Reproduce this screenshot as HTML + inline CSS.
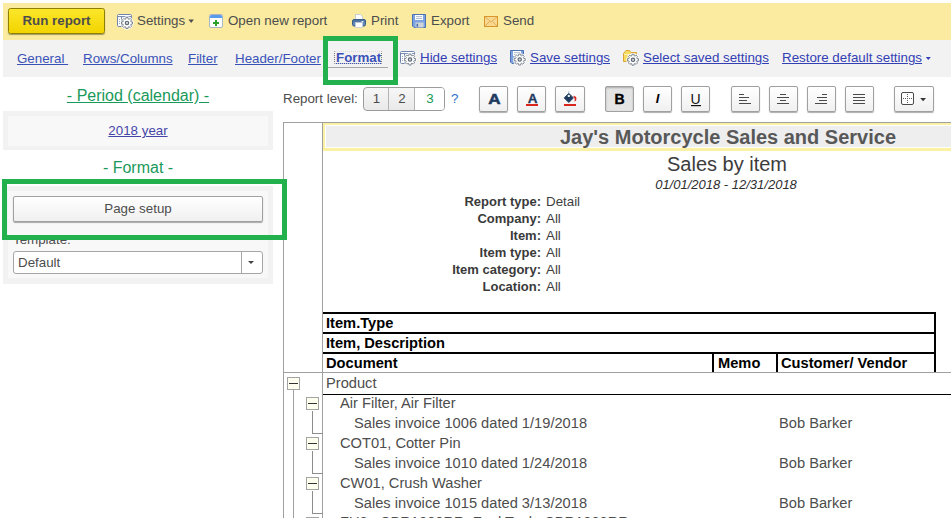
<!DOCTYPE html>
<html><head><meta charset="utf-8"><title>Sales by item</title>
<style>
*{box-sizing:border-box;margin:0;padding:0}
html,body{width:951px;height:518px;overflow:hidden;background:#fff}
body{position:relative;font-family:"Liberation Sans",sans-serif;font-size:13.33px;color:#4d4d4d}
.abs{position:absolute}
.t{position:absolute;white-space:nowrap;line-height:16px}
#topbar{left:3px;top:3px;width:948px;height:37px;background:#faeba0}
#linkbar{left:3px;top:40px;width:948px;height:37px;background:#f2f2f2}
#run{left:8px;top:8px;width:97px;height:26px;border:1px solid #8f7e00;border-radius:2.5px;background:linear-gradient(#fbe62a,#f2d400);box-shadow:0 1px 1px rgba(0,0,0,.35);font-weight:bold;font-size:13.33px;text-align:center;line-height:24px;color:#4d4d4d}
.tb{top:13px}
.lk{top:51px;color:#3a52b8;text-decoration:underline}
.gl{color:#19995a;text-decoration:underline}
.panel{background:#f2f2f2}
.inner{background:#f8f8f8}
.btn{position:absolute;border:1px solid #a0a0a0;border-radius:2px;background:linear-gradient(#ffffff,#f0f0f0);box-shadow:0 1px 1px rgba(0,0,0,.32)}
.fb{top:86px;width:29px;height:26px}
.green{position:absolute;border:5px solid #22b14c}
.row{position:absolute;white-space:nowrap;font-size:14.67px;line-height:20px;color:#4d4d4d}
.hd{position:absolute;white-space:nowrap;font-size:14.67px;line-height:20px;color:#000;font-weight:bold}
.pl{position:absolute;white-space:nowrap;font-weight:bold;font-size:13px;line-height:17px;color:#3a3a3a;right:410px;text-align:right}
.pv{position:absolute;white-space:nowrap;font-size:13.33px;line-height:17px;left:546px;color:#3e3e3e}
.bk{position:absolute;background:#000}
.gy{position:absolute;background:#a0a0a0}
.tbx{position:absolute;width:13px;height:13px;border:1px solid #a3a3a3;background:#fffff0}
.tbx:after{content:"";position:absolute;left:1px;top:5px;width:9px;height:1px;background:#333}
</style></head><body>
<div class="abs" id="topbar"></div>
<div class="abs" id="linkbar"></div>
<div class="abs" id="run">Run report</div>

<!-- top toolbar -->
<div class="t tb" style="left:137px">Settings</div>
<div class="t tb" style="left:228px">Open new report</div>
<div class="t tb" style="left:371px">Print</div>
<div class="t tb" style="left:431px">Export</div>
<div class="t tb" style="left:503px">Send</div>

<!-- link bar -->
<div class="t lk" style="left:17px">General&nbsp;</div>
<div class="t lk" style="left:83px">Rows/Columns</div>
<div class="t lk" style="left:188px">Filter</div>
<div class="t lk" style="left:235px">Header/Footer</div>
<div class="t lk" style="left:336px;top:50px;font-weight:bold">Format</div>
<div class="abs" style="left:334px;top:51px;width:48px;height:13px;border:1px dotted #777;border-top-color:#ddd;border-bottom-color:#ccc"></div>
<div class="abs" style="left:328px;top:67px;width:60px;height:1px;background:#a6a6a6"></div>
<div class="t lk" style="left:420px;top:50px;color:#3340b4">Hide settings</div>
<div class="t lk" style="left:530px;top:50px;color:#3340b4">Save settings</div>
<div class="t lk" style="left:643px;top:50px;color:#3340b4">Select saved settings</div>
<div class="t lk" style="left:782px;top:50px;color:#3340b4">Restore default settings</div>

<!-- left panel -->
<div class="t gl" style="left:3px;width:270px;text-align:center;top:86px;font-size:16px;line-height:20px">- Period (calendar) -</div>
<div class="abs panel" style="left:3px;top:111px;width:270px;height:39px"></div>
<div class="abs inner" style="left:8px;top:116px;width:260px;height:30px"></div>
<div class="t lk" style="left:8px;width:260px;text-align:center;top:123px;color:#4545a8">2018 year</div>
<div class="t" style="left:3px;width:270px;text-align:center;top:158px;font-size:16px;line-height:20px;color:#19995a">- Format -</div>
<div class="abs panel" style="left:3px;top:186px;width:270px;height:98px"></div>
<div class="abs inner" style="left:8px;top:191px;width:260px;height:87px"></div>
<div class="btn" style="left:13px;top:196px;width:250px;height:26px;text-align:center;line-height:23px">Page setup</div>
<div class="t" style="left:13px;top:232px">Template:</div>
<div class="abs" style="left:13px;top:251px;width:250px;height:23px;border:1px solid #a6a6a6;border-radius:3px;background:#fff;line-height:21px;padding-left:4px">Default</div>
<div class="abs" style="left:241px;top:252px;width:1px;height:21px;background:#a6a6a6"></div>
<div class="abs" style="left:248px;top:261px;width:0;height:0;border:3px solid transparent;border-top:3.5px solid #444"></div>

<!-- format bar -->
<div class="t" style="left:283px;top:91px">Report level:</div>
<div class="btn" style="left:363px;top:87px;width:82px;height:24px;border-radius:4px;border-color:#9c9c9c;background:linear-gradient(#f7f7f7,#e9e9e9);box-shadow:none"></div>
<div class="abs" style="left:415px;top:88px;width:29px;height:22px;background:#fff;border-radius:0 3px 3px 0"></div>
<div class="abs" style="left:388px;top:88px;width:1px;height:22px;background:#b3b3b3"></div>
<div class="abs" style="left:414px;top:88px;width:1px;height:22px;background:#b3b3b3"></div>
<div class="t" style="left:364px;width:25px;text-align:center;top:91px">1</div>
<div class="t" style="left:389px;width:26px;text-align:center;top:91px">2</div>
<div class="t" style="left:415px;width:30px;text-align:center;top:91px;color:#19995a">3</div>
<div class="t" style="left:451px;top:91px;color:#2a6fc9">?</div>

<div class="btn fb" style="left:479px"></div><div class="t" style="left:480px;width:29px;text-align:center;top:89px;font-size:15.5px;line-height:20px;font-weight:bold;color:#1f3a5f;-webkit-text-stroke:.6px #1f3a5f;transform:scaleX(1.1)">A</div>
<div class="btn fb" style="left:517px"></div><div class="t" style="left:518px;width:29px;text-align:center;top:89px;font-size:13.5px;line-height:20px;font-weight:bold;color:#1f3a5f;-webkit-text-stroke:.3px #1f3a5f">A</div>
<div class="btn fb" style="left:555px;width:30px"></div>
<div class="btn fb" style="left:605px;background:#e4e4e4;box-shadow:inset 0 1px 2px rgba(0,0,0,.25)"></div><div class="t" style="left:605px;width:29px;text-align:center;top:89px;font-size:14px;line-height:20px;font-weight:bold;color:#000;-webkit-text-stroke:.4px #000">B</div>
<div class="btn fb" style="left:643px"></div><div class="t" style="left:643px;width:29px;text-align:center;top:89px;font-size:13px;line-height:20px;font-weight:bold;font-style:italic;color:#000">I</div>
<div class="btn fb" style="left:681px"></div><div class="t" style="left:681px;width:29px;text-align:center;top:89px;font-size:14px;line-height:20px;color:#111">U</div>
<div class="btn fb" style="left:731px"></div>
<div class="btn fb" style="left:769px"></div>
<div class="btn fb" style="left:807px"></div>
<div class="btn fb" style="left:845px"></div>
<div class="btn fb" style="left:894px;width:40px"></div>

<!-- report -->
<div class="gy" style="left:283px;top:122px;width:668px;height:1px"></div>
<div class="gy" style="left:283px;top:122px;width:1px;height:396px"></div>
<div class="gy" style="left:322px;top:122px;width:1px;height:396px"></div>
<div class="abs" style="left:323px;top:123px;width:640px;height:28px;border:2px solid #fcf0a2;border-bottom-width:3px;background:#eeeeee;box-shadow:inset 0 0 0 1px #fff"></div>
<div class="t" style="left:503px;width:448px;text-align:center;top:125px;font-size:20px;line-height:24px;font-weight:bold;color:#585858;margin-left:1px">Jay's Motorcycle Sales and Service</div>
<div class="t" style="left:503px;width:448px;text-align:center;top:152px;font-size:20px;line-height:24px;color:#3c3c3c">Sales by item</div>
<div class="t" style="left:503px;width:448px;text-align:center;top:177px;font-size:13px;line-height:16px;font-style:italic;margin-left:-1px;color:#2e2e2e">01/01/2018 - 12/31/2018</div>

<div class="pl" style="top:193px">Report type:</div><div class="pv" style="top:193px">Detail</div>
<div class="pl" style="top:210px">Company:</div><div class="pv" style="top:210px">All</div>
<div class="pl" style="top:227px">Item:</div><div class="pv" style="top:227px">All</div>
<div class="pl" style="top:244px">Item type:</div><div class="pv" style="top:244px">All</div>
<div class="pl" style="top:261px">Item category:</div><div class="pv" style="top:261px">All</div>
<div class="pl" style="top:278px">Location:</div><div class="pv" style="top:278px">All</div>

<!-- table header -->
<div class="bk" style="left:323px;top:312px;width:613px;height:2px"></div>
<div class="bk" style="left:323px;top:332px;width:613px;height:2px"></div>
<div class="bk" style="left:323px;top:352px;width:613px;height:2px"></div>
<div class="bk" style="left:934px;top:312px;width:2px;height:60px"></div>
<div class="bk" style="left:712px;top:352px;width:2px;height:20px"></div>
<div class="bk" style="left:776px;top:352px;width:2px;height:20px"></div>
<div class="hd" style="left:326px;top:313px">Item.Type</div>
<div class="hd" style="left:326px;top:333px">Item, Description</div>
<div class="hd" style="left:326px;top:353px">Document</div>
<div class="hd" style="left:718px;top:353px">Memo</div>
<div class="hd" style="left:781px;top:353px">Customer/ Vendor</div>
<div class="gy" style="left:283px;top:372px;width:668px;height:1px"></div>
<div class="bk" style="left:323px;top:394px;width:628px;height:1px"></div>

<!-- rows -->
<div class="row" style="left:326px;top:373px">Product</div>
<div class="row" style="left:340px;top:393px">Air Filter, Air Filter</div>
<div class="row" style="left:354px;top:413px">Sales invoice 1006 dated 1/19/2018</div><div class="row" style="left:779px;top:413px">Bob Barker</div>
<div class="row" style="left:340px;top:433px">COT01, Cotter Pin</div>
<div class="row" style="left:354px;top:453px">Sales invoice 1010 dated 1/24/2018</div><div class="row" style="left:779px;top:453px">Bob Barker</div>
<div class="row" style="left:340px;top:473px">CW01, Crush Washer</div>
<div class="row" style="left:354px;top:493px">Sales invoice 1015 dated 3/13/2018</div><div class="row" style="left:779px;top:493px">Bob Barker</div>
<div class="row" style="left:340px;top:512px">FU2,&nbsp; CBR1000RR, Fuel Tank, CBR1000RR</div>

<!-- tree -->
<div class="gy" style="left:293px;top:390px;width:1px;height:128px"></div>
<div class="abs" style="left:312px;top:411px;width:11px;height:23px;border-left:1px solid #8c8c8c;border-bottom:1px solid #8c8c8c"></div>
<div class="abs" style="left:312px;top:451px;width:11px;height:23px;border-left:1px solid #8c8c8c;border-bottom:1px solid #8c8c8c"></div>
<div class="abs" style="left:312px;top:491px;width:11px;height:23px;border-left:1px solid #8c8c8c;border-bottom:1px solid #8c8c8c"></div>
<div class="tbx" style="left:287px;top:377px"></div>
<div class="tbx" style="left:306px;top:397px"></div>
<div class="tbx" style="left:306px;top:437px"></div>
<div class="tbx" style="left:306px;top:477px"></div>
<div class="tbx" style="left:306px;top:517px"></div>

<svg class="abs" style="left:0;top:0" width="951" height="518" viewBox="0 0 951 518">
<!--ICONS-->
<g transform="translate(117 14)"><rect x="0.5" y="0.5" width="14" height="12" rx="1.2" fill="#fff" stroke="#7084ad"/><path d="M0.5 2.6h14M4.5 2.6v10" stroke="#7084ad" stroke-width="1" fill="none"/><path d="M1.3 1.5h2.6M5.3 1.5h3.4M9.9 1.5h3.6" stroke="#fff" stroke-width=".9"/><rect x="2.2" y="5" width=".9" height=".9" fill="#7084ad"/><rect x="2.2" y="7" width=".9" height=".9" fill="#7084ad"/><rect x="2.2" y="9" width=".9" height=".9" fill="#7084ad"/></g>
<g transform="translate(127 23)"><path d="M4.05 -1.11 L5.49 -1.09 L5.49 1.09 L4.05 1.11 L3.65 2.08 L4.66 3.11 L3.11 4.66 L2.08 3.65 L1.11 4.05 L1.09 5.49 L-1.09 5.49 L-1.11 4.05 L-2.08 3.65 L-3.11 4.66 L-4.66 3.11 L-3.65 2.08 L-4.05 1.11 L-5.49 1.09 L-5.49 -1.09 L-4.05 -1.11 L-3.65 -2.08 L-4.66 -3.11 L-3.11 -4.66 L-2.08 -3.65 L-1.11 -4.05 L-1.09 -5.49 L1.09 -5.49 L1.11 -4.05 L2.08 -3.65 L3.11 -4.66 L4.66 -3.11 L3.65 -2.08Z" fill="#fff" stroke="#fff" stroke-width="2.4" stroke-linejoin="round" opacity=".85"/><path d="M4.05 -1.11 L5.49 -1.09 L5.49 1.09 L4.05 1.11 L3.65 2.08 L4.66 3.11 L3.11 4.66 L2.08 3.65 L1.11 4.05 L1.09 5.49 L-1.09 5.49 L-1.11 4.05 L-2.08 3.65 L-3.11 4.66 L-4.66 3.11 L-3.65 2.08 L-4.05 1.11 L-5.49 1.09 L-5.49 -1.09 L-4.05 -1.11 L-3.65 -2.08 L-4.66 -3.11 L-3.11 -4.66 L-2.08 -3.65 L-1.11 -4.05 L-1.09 -5.49 L1.09 -5.49 L1.11 -4.05 L2.08 -3.65 L3.11 -4.66 L4.66 -3.11 L3.65 -2.08Z" fill="#fdfdfd" stroke="#6a7582" stroke-width=".85" stroke-linejoin="round"/><circle r="1.7" fill="#cfd3d7" stroke="#5c6773" stroke-width="1.1"/></g>
<path d="M188.5 19.5h5.4l-2.7 3.4z" fill="#4d4d4d"/>
<g transform="translate(209 14)"><rect x="0.5" y="0.5" width="13" height="13" rx="1.5" fill="#fff" stroke="#a9b4c4"/><path d="M1 2.5Q1 1 2.5 1h9Q13 1 13 2.5V4H1z" fill="#5b9ae8"/><path d="M6 6h2v2h2v2h-2v2h-2v-2h-2v-2h2z" fill="#2aa22a"/></g>
<g transform="translate(352 14)"><path d="M3.5 0.5h5l2 2V6h-7z" fill="#fff" stroke="#b8c4d4" stroke-width=".8"/><rect x="0.5" y="5.5" width="13" height="6.5" rx="1.5" fill="#6088b5" stroke="#3a5d89"/><rect x="1.2" y="6.2" width="11.6" height="1.6" fill="#4a6e9b"/><rect x="9.5" y="7" width="2" height="1" fill="#e8f0fa"/><rect x="3.5" y="8.5" width="7" height="5" fill="#fff" stroke="#c0c9d6" stroke-width=".8"/></g>
<g transform="translate(412 14)"><path d="M0.5 0.5h13v13h-11.5l-1.5-1.5z" fill="#7da2e0" stroke="#4c72b4"/><rect x="3" y="1" width="8" height="5" fill="#fff"/><rect x="4" y="2.2" width="6" height="0.9" fill="#a9b4c4"/><rect x="4" y="4" width="6" height="0.9" fill="#a9b4c4"/><rect x="3.5" y="8.5" width="8" height="5" fill="#cfd4d6"/><rect x="4.5" y="9.8" width="1.6" height="3" fill="#4c72b4"/></g>
<g transform="translate(484 16)"><rect x="0.5" y="0.5" width="13" height="10" fill="#f8d890" stroke="#d9962c"/><path d="M1 1l6 5 6-5M1 10l4.5-4.5M13 10l-4.5-4.5" fill="none" stroke="#dea448" stroke-width=".8"/></g>
<g transform="translate(400 51)"><rect x="0.5" y="0.5" width="14" height="12" rx="1.2" fill="#fff" stroke="#7084ad"/><path d="M0.5 2.6h14M4.5 2.6v10" stroke="#7084ad" stroke-width="1" fill="none"/><path d="M1.3 1.5h2.6M5.3 1.5h3.4M9.9 1.5h3.6" stroke="#fff" stroke-width=".9"/><rect x="2.2" y="5" width=".9" height=".9" fill="#7084ad"/><rect x="2.2" y="7" width=".9" height=".9" fill="#7084ad"/><rect x="2.2" y="9" width=".9" height=".9" fill="#7084ad"/></g>
<g transform="translate(410 59.6)"><path d="M4.05 -1.11 L5.49 -1.09 L5.49 1.09 L4.05 1.11 L3.65 2.08 L4.66 3.11 L3.11 4.66 L2.08 3.65 L1.11 4.05 L1.09 5.49 L-1.09 5.49 L-1.11 4.05 L-2.08 3.65 L-3.11 4.66 L-4.66 3.11 L-3.65 2.08 L-4.05 1.11 L-5.49 1.09 L-5.49 -1.09 L-4.05 -1.11 L-3.65 -2.08 L-4.66 -3.11 L-3.11 -4.66 L-2.08 -3.65 L-1.11 -4.05 L-1.09 -5.49 L1.09 -5.49 L1.11 -4.05 L2.08 -3.65 L3.11 -4.66 L4.66 -3.11 L3.65 -2.08Z" fill="#fff" stroke="#fff" stroke-width="2.4" stroke-linejoin="round" opacity=".85"/><path d="M4.05 -1.11 L5.49 -1.09 L5.49 1.09 L4.05 1.11 L3.65 2.08 L4.66 3.11 L3.11 4.66 L2.08 3.65 L1.11 4.05 L1.09 5.49 L-1.09 5.49 L-1.11 4.05 L-2.08 3.65 L-3.11 4.66 L-4.66 3.11 L-3.65 2.08 L-4.05 1.11 L-5.49 1.09 L-5.49 -1.09 L-4.05 -1.11 L-3.65 -2.08 L-4.66 -3.11 L-3.11 -4.66 L-2.08 -3.65 L-1.11 -4.05 L-1.09 -5.49 L1.09 -5.49 L1.11 -4.05 L2.08 -3.65 L3.11 -4.66 L4.66 -3.11 L3.65 -2.08Z" fill="#fdfdfd" stroke="#6a7582" stroke-width=".85" stroke-linejoin="round"/><circle r="1.7" fill="#cfd3d7" stroke="#5c6773" stroke-width="1.1"/></g>
<g transform="translate(510 50)"><path d="M0.5 0.5h13v13h-11.5l-1.5-1.5z" fill="#7da2e0" stroke="#4c72b4"/><rect x="3" y="1" width="8" height="5" fill="#fff"/><rect x="4" y="2.2" width="6" height="0.9" fill="#a9b4c4"/><rect x="4" y="4" width="6" height="0.9" fill="#a9b4c4"/><rect x="3.5" y="8.5" width="8" height="5" fill="#cfd4d6"/><rect x="4.5" y="9.8" width="1.6" height="3" fill="#4c72b4"/></g>
<g transform="translate(519.7 59.6)"><path d="M4.05 -1.11 L5.49 -1.09 L5.49 1.09 L4.05 1.11 L3.65 2.08 L4.66 3.11 L3.11 4.66 L2.08 3.65 L1.11 4.05 L1.09 5.49 L-1.09 5.49 L-1.11 4.05 L-2.08 3.65 L-3.11 4.66 L-4.66 3.11 L-3.65 2.08 L-4.05 1.11 L-5.49 1.09 L-5.49 -1.09 L-4.05 -1.11 L-3.65 -2.08 L-4.66 -3.11 L-3.11 -4.66 L-2.08 -3.65 L-1.11 -4.05 L-1.09 -5.49 L1.09 -5.49 L1.11 -4.05 L2.08 -3.65 L3.11 -4.66 L4.66 -3.11 L3.65 -2.08Z" fill="#fff" stroke="#fff" stroke-width="2.4" stroke-linejoin="round" opacity=".85"/><path d="M4.05 -1.11 L5.49 -1.09 L5.49 1.09 L4.05 1.11 L3.65 2.08 L4.66 3.11 L3.11 4.66 L2.08 3.65 L1.11 4.05 L1.09 5.49 L-1.09 5.49 L-1.11 4.05 L-2.08 3.65 L-3.11 4.66 L-4.66 3.11 L-3.65 2.08 L-4.05 1.11 L-5.49 1.09 L-5.49 -1.09 L-4.05 -1.11 L-3.65 -2.08 L-4.66 -3.11 L-3.11 -4.66 L-2.08 -3.65 L-1.11 -4.05 L-1.09 -5.49 L1.09 -5.49 L1.11 -4.05 L2.08 -3.65 L3.11 -4.66 L4.66 -3.11 L3.65 -2.08Z" fill="#fdfdfd" stroke="#6a7582" stroke-width=".85" stroke-linejoin="round"/><circle r="1.7" fill="#cfd3d7" stroke="#5c6773" stroke-width="1.1"/></g>
<g transform="translate(623 50)"><path d="M0.5 3.5l2.5-3h3.5l1.5 2h5.5v9h-13z" fill="#f7dc62" stroke="#d8a437"/><path d="M1 4.5h12" stroke="#fbeeb0" stroke-width="1"/></g>
<g transform="translate(633 59.8)"><path d="M4.05 -1.11 L5.49 -1.09 L5.49 1.09 L4.05 1.11 L3.65 2.08 L4.66 3.11 L3.11 4.66 L2.08 3.65 L1.11 4.05 L1.09 5.49 L-1.09 5.49 L-1.11 4.05 L-2.08 3.65 L-3.11 4.66 L-4.66 3.11 L-3.65 2.08 L-4.05 1.11 L-5.49 1.09 L-5.49 -1.09 L-4.05 -1.11 L-3.65 -2.08 L-4.66 -3.11 L-3.11 -4.66 L-2.08 -3.65 L-1.11 -4.05 L-1.09 -5.49 L1.09 -5.49 L1.11 -4.05 L2.08 -3.65 L3.11 -4.66 L4.66 -3.11 L3.65 -2.08Z" fill="#fff" stroke="#fff" stroke-width="2.4" stroke-linejoin="round" opacity=".85"/><path d="M4.05 -1.11 L5.49 -1.09 L5.49 1.09 L4.05 1.11 L3.65 2.08 L4.66 3.11 L3.11 4.66 L2.08 3.65 L1.11 4.05 L1.09 5.49 L-1.09 5.49 L-1.11 4.05 L-2.08 3.65 L-3.11 4.66 L-4.66 3.11 L-3.65 2.08 L-4.05 1.11 L-5.49 1.09 L-5.49 -1.09 L-4.05 -1.11 L-3.65 -2.08 L-4.66 -3.11 L-3.11 -4.66 L-2.08 -3.65 L-1.11 -4.05 L-1.09 -5.49 L1.09 -5.49 L1.11 -4.05 L2.08 -3.65 L3.11 -4.66 L4.66 -3.11 L3.65 -2.08Z" fill="#fdfdfd" stroke="#6a7582" stroke-width=".85" stroke-linejoin="round"/><circle r="1.7" fill="#cfd3d7" stroke="#5c6773" stroke-width="1.1"/></g>
<path d="M925.8 57h5l-2.5 3z" fill="#3340b4"/>
<!--/ICONS-->
<rect x="526" y="104" width="12" height="2" fill="#d9261c"/>
<g><path d="M568.8 93.3l4.6 4.6-4.6 4.6-4.6-4.6z" fill="#1f3a5f" stroke="#1f3a5f" stroke-width=".9" stroke-linejoin="round"/><circle cx="568.8" cy="95.9" r="1.2" fill="#eef3f8"/><path d="M568.8 91v2.4" stroke="#a9bdd6" stroke-width=".9"/><path d="M573.2 95.7Q577.4 96 576.2 100Q575.7 101.3 574.5 101.8Q575.3 98.4 573.2 95.7z" fill="#d9261c"/><rect x="564" y="104" width="12" height="2" fill="#d9261c"/></g>
<rect x="691" y="105" width="10" height="1.2" fill="#111"/>




<rect x="739" y="94" width="5" height="1" fill="#4a4a4a"/><rect x="739" y="97" width="10" height="1" fill="#4a4a4a"/><rect x="739" y="100" width="8" height="1" fill="#4a4a4a"/><rect x="739" y="103" width="12" height="1" fill="#4a4a4a"/><rect x="780" y="94" width="6" height="1" fill="#4a4a4a"/><rect x="777" y="97" width="12" height="1" fill="#4a4a4a"/><rect x="780" y="100" width="6" height="1" fill="#4a4a4a"/><rect x="777" y="103" width="12" height="1" fill="#4a4a4a"/><rect x="822" y="94" width="5" height="1" fill="#4a4a4a"/><rect x="817" y="97" width="10" height="1" fill="#4a4a4a"/><rect x="819" y="100" width="8" height="1" fill="#4a4a4a"/><rect x="815" y="103" width="12" height="1" fill="#4a4a4a"/><rect x="853" y="94" width="12" height="1" fill="#4a4a4a"/><rect x="853" y="97" width="12" height="1" fill="#4a4a4a"/><rect x="853" y="100" width="12" height="1" fill="#4a4a4a"/><rect x="853" y="103" width="12" height="1" fill="#4a4a4a"/>
<rect x="901.5" y="92.5" width="12" height="12" rx="1.5" fill="#fff" stroke="#4a4a4a"/><path d="M903 98.5h9M907.5 94v9" stroke="#5a5a5a" stroke-width="1" stroke-dasharray="1 1" fill="none"/><path d="M920.2 98h5.8l-2.9 3.2z" fill="#333"/>
</svg>
<!-- green highlight -->
<div class="green" style="left:323px;top:36px;width:75px;height:49px"></div>
<div class="green" style="left:2px;top:179px;width:285px;height:61px"></div>
</body></html>
